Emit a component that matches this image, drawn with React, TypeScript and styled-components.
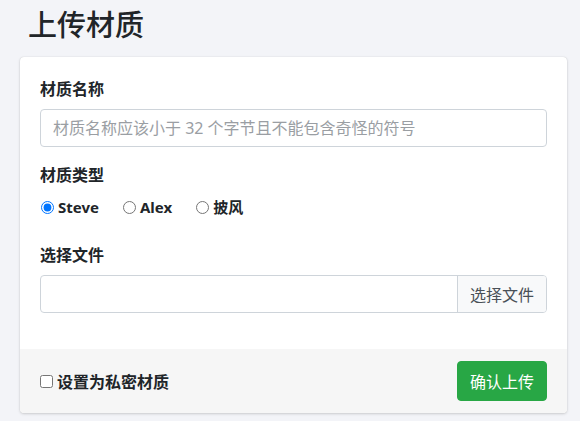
import React from 'react'
import styled, { createGlobalStyle } from 'styled-components'

const GlobalStyle = createGlobalStyle`
  body {
    margin: 0;
    background: #f3f4f8;
    font-family: "Noto Sans", "Noto Sans CJK SC", sans-serif;
    color: #212529;
  }
  * { box-sizing: border-box; }
`

const skinTypes = ['Steve', 'Alex', '披风']

const App = () => {
  return (
    <Page>
      <GlobalStyle />
      <Title>上传材质</Title>
      <Card>
        <CardBody>
          <FormGroup>
            <Label>材质名称</Label>
            <TextInput placeholder="材质名称应该小于 32 个字节且不能包含奇怪的符号" />
          </FormGroup>

          <FormGroup spacing={24}>
            <Label>材质类型</Label>
            <RadioRow>
              {skinTypes.map((type, i) => (
                <RadioLabel key={type}>
                  <Radio type="radio" name="type" defaultChecked={i === 0} />
                  {type}
                </RadioLabel>
              ))}
            </RadioRow>
          </FormGroup>

          <FormGroup>
            <Label>选择文件</Label>
            <FileGroup>
              <FileName />
              <FileButton>选择文件</FileButton>
            </FileGroup>
          </FormGroup>
        </CardBody>

        <CardFooter>
          <CheckLabel>
            <Checkbox type="checkbox" />
            设置为私密材质
          </CheckLabel>
          <SubmitButton>确认上传</SubmitButton>
        </CardFooter>
      </Card>
    </Page>
  )
}

const Page = styled.div`
  padding: 0 13px 8px 20px;
`

const Title = styled.h1`
  margin: 0;
  padding: 5px 0 0 8px;
  height: 57px;
  font-size: 29px;
  font-weight: 500;
  line-height: 40px;
  color: #212529;
`

const Card = styled.div`
  background: #fff;
  border-radius: 4px;
  box-shadow: 0 0 1px rgba(0, 0, 0, 0.18), 0 1px 3px rgba(0, 0, 0, 0.16);
  overflow: hidden;
`

const CardBody = styled.div`
  padding: 20px 20px 20px;
`

const FormGroup = styled.div<{ spacing?: number }>`
  margin-bottom: ${p => (p.spacing ?? 16)}px;
`

const Label = styled.div`
  font-size: 16px;
  font-weight: 700;
  line-height: 24px;
  margin-bottom: 8px;
`

const TextInput = styled.input`
  display: block;
  width: 100%;
  height: 38px;
  padding: 6px 12px;
  font: inherit;
  font-size: 16px;
  border: 1px solid #ced4da;
  border-radius: 4px;
  color: #495057;
  &::placeholder { color: #9a9ea3; }
`

const RadioRow = styled.div`
  display: flex;
  align-items: center;
  gap: 23px;
`

const RadioLabel = styled.label`
  display: flex;
  align-items: center;
  font-size: 15px;
  font-weight: 700;
  line-height: 24px;
`

const Radio = styled.input`
  margin: 0 4px 0 1px;
  width: 13px;
  height: 13px;
`

const FileGroup = styled.div`
  display: flex;
  height: 38px;
  border: 1px solid #ced4da;
  border-radius: 4px;
  overflow: hidden;
`

const FileName = styled.div`
  flex: 1;
`

const FileButton = styled.div`
  display: flex;
  align-items: center;
  padding: 0 12px;
  background: #f8f9fa;
  border-left: 1px solid #ced4da;
  font-size: 16px;
  color: #495057;
`

const CardFooter = styled.div`
  display: flex;
  align-items: center;
  justify-content: space-between;
  padding: 12px 20px;
  background: #f6f6f6;
`

const CheckLabel = styled.label`
  display: flex;
  align-items: center;
  font-size: 16px;
  font-weight: 700;
`

const Checkbox = styled.input`
  margin: 0 4px 0 0;
  width: 13px;
  height: 13px;
`

const SubmitButton = styled.button`
  height: 40px;
  padding: 0 12px;
  background: #28a745;
  border: 1px solid #28a745;
  border-radius: 4px;
  color: #fff;
  font: inherit;
  font-size: 16px;
`

export default App
